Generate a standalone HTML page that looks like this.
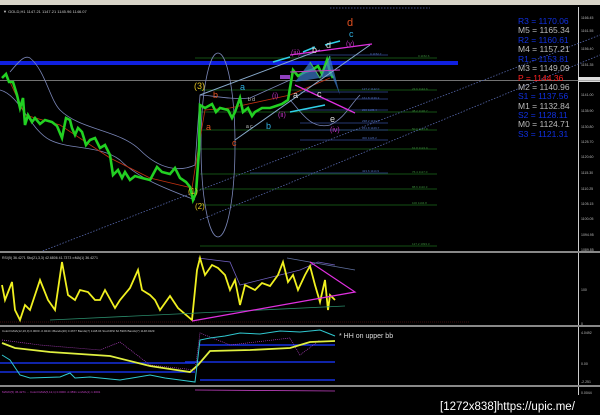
<!DOCTYPE html>
<html><head><meta charset="utf-8"><style>
html,body{margin:0;padding:0;background:#000;width:600px;height:415px;overflow:hidden}
svg{display:block}
text{font-family:"Liberation Sans",sans-serif}
</style></head><body>
<svg width="600" height="415" viewBox="0 0 600 415" xmlns="http://www.w3.org/2000/svg">
<rect width="600" height="415" fill="#000"/>
<rect x="0" y="0" width="600" height="5" fill="#d8d4c8"/>
<text x="3" y="13" font-size="4" fill="#ccc">▼ GOLD,H1  1147.21 1147.21 1145.96 1146.07</text>
<line x1="578.5" y1="7" x2="578.5" y2="395" stroke="#ccc" stroke-width="1"/>
<g font-size="3.5" fill="#bbb">
<text x="581" y="19">1166.45</text><text x="581" y="32">1161.55</text><text x="581" y="50">1156.40</text>
<text x="581" y="66">1151.35</text><text x="581" y="96">1141.00</text><text x="581" y="112">1135.90</text>
<text x="581" y="128">1130.80</text><text x="581" y="143">1125.70</text><text x="581" y="158">1120.60</text>
<text x="581" y="174">1115.30</text><text x="581" y="190">1110.25</text><text x="581" y="205">1105.15</text>
<text x="581" y="220">1100.05</text><text x="581" y="236">1094.95</text><text x="581" y="251">1089.85</text>
<text x="581" y="291">100</text><text x="581" y="325">0</text><text x="581" y="334">4.0492</text>
<text x="581" y="365">0.00</text><text x="581" y="383">-2.251</text><text x="581" y="394">0.0044</text>
</g>
<rect x="578" y="77" width="22" height="5" fill="#ddd"/>
<rect x="0" y="61" width="458" height="4" fill="#1020e0"/>
<line x1="0" y1="80.5" x2="600" y2="80.5" stroke="#999" stroke-width="0.8"/>
<g stroke="#1a6a1a" stroke-width="0.8">
<line x1="195" y1="58" x2="437" y2="58"/><line x1="200" y1="90" x2="437" y2="90"/>
<line x1="200" y1="112" x2="437" y2="112"/><line x1="200" y1="130" x2="437" y2="130"/>
<line x1="200" y1="149" x2="437" y2="149"/><line x1="200" y1="174" x2="437" y2="174"/>
<line x1="200" y1="189" x2="437" y2="189"/><line x1="200" y1="205" x2="437" y2="205"/>
<line x1="200" y1="246" x2="437" y2="246"/>
</g>
<g stroke="#334a99" stroke-width="0.8">
<line x1="300" y1="55" x2="388" y2="55"/><line x1="300" y1="92" x2="388" y2="92"/>
<line x1="300" y1="99" x2="388" y2="99"/><line x1="300" y1="110" x2="388" y2="110"/>
<line x1="300" y1="123" x2="388" y2="123"/><line x1="300" y1="130" x2="388" y2="130"/>
<line x1="300" y1="140" x2="388" y2="140"/><line x1="250" y1="173" x2="388" y2="173"/>
</g>
<g font-size="3" fill="#3a8a3a"><text x="418" y="57">0.1152.6</text><text x="412" y="90">23.6 1142.6</text><text x="412" y="112">38.2 1136.7</text><text x="412" y="130">50.0 1127.8</text><text x="412" y="149">61.8 1122.9</text><text x="412" y="173">76.4 1117.0</text><text x="412" y="188">88.6 1110.3</text><text x="412" y="204">100 1104.8</text><text x="412" y="245">127.2 1093.3</text></g>
<g font-size="3" fill="#5070c0"><text x="370" y="55">0 1152.7</text><text x="362" y="90">127.2 1142.0</text><text x="362" y="99">161.8 1139.3</text><text x="362" y="111">200 1135.4</text><text x="362" y="122">238.2 1131.5</text><text x="362" y="129">261.8 1129.7</text><text x="362" y="139">300 1126.2</text><text x="362" y="172">423.6 1114.9</text></g>
<g stroke="#5566aa" stroke-width="0.8" stroke-dasharray="1.5,1.5" fill="none">
<line x1="40" y1="252" x2="600" y2="35"/><line x1="200" y1="220" x2="600" y2="55"/>
<line x1="330" y1="8" x2="430" y2="8"/>
</g>
<g stroke="#7a86b8" stroke-width="0.8" fill="none">
<path d="M10,72 C20,60 25,55 30,58 C45,70 50,100 60,110 C80,130 120,130 140,150 C160,170 180,172 195,165 L200,95 C210,95 230,100 250,98 L290,80"/>
<path d="M0,90 C20,95 30,130 50,140 C70,150 100,145 120,160 C140,180 170,190 195,200"/>
<ellipse cx="218" cy="145" rx="17" ry="92"/>
<path d="M290,100 C300,110 310,130 330,125 C345,118 350,105 360,95"/>
</g>
<path d="M10,82 L25,115 L60,125 L110,158 L150,178 L192,188 L198,150 L205,110 L230,108 L290,95 L330,78" stroke="#c03010" stroke-width="0.8" fill="none"/>
<path d="M2,78 L6,74 L9,82 L13,82 L17,95 L20,108 L23,98 L25,125 L28,115 L32,122 L35,118 L40,124 L45,120 L52,122 L57,126 L62,138 L66,118 L70,120 L72,128 L75,135 L78,128 L82,132 L86,145 L90,140 L95,138 L100,148 L105,145 L110,155 L113,175 L118,170 L122,178 L125,172 L130,180 L135,176 L142,178 L150,180 L157,167 L162,172 L170,174 L175,168 L180,178 L186,182 L190,187 L193,200 L196,193 L199,150 L200,105 L205,108 L212,104 L216,112 L220,108 L228,110 L232,118 L235,112 L240,98 L243,112 L248,108 L252,116 L255,112 L262,108 L270,108 L276,106 L282,104 L288,100 L291,82 L293,70 L298,76 L305,72 L312,70 L318,66 L322,74 L327,60 L330,72 L333,78" stroke="#22d022" stroke-width="2.6" fill="none"/>
<path d="M295,82 L310,62 L320,78 L330,56 L340,95 L332,76 Z" fill="#3a7acc" fill-opacity="0.7"/>
<path d="M310,62 L320,78 L330,56" stroke="#40c060" stroke-width="1" fill="none"/>
<rect x="280" y="75" width="10" height="4" fill="#9040c0"/>
<g stroke-width="1" fill="none">
<line x1="200" y1="95" x2="320" y2="50" stroke="#88aacc"/>
<line x1="235" y1="140" x2="370" y2="45" stroke="#88aacc"/>
<line x1="290" y1="55" x2="372" y2="44" stroke="#e030e0" stroke-width="1.3"/>
<line x1="295" y1="85" x2="355" y2="113" stroke="#e030e0" stroke-width="1.3"/>
<line x1="290" y1="72" x2="340" y2="70" stroke="#c040c0"/>
</g>
<g stroke="#30d0e8" stroke-width="1.5"><line x1="273" y1="62" x2="290" y2="57"/><line x1="303" y1="52" x2="315" y2="47"/><line x1="325" y1="45" x2="340" y2="41"/><line x1="290" y1="112" x2="325" y2="105"/></g>
<g font-family="Liberation Serif" font-size="9">
<text x="194" y="89" fill="#e0c020">(3)</text><text x="213" y="98" fill="#e05020">b</text>
<text x="206" y="130" fill="#e05020">a</text><text x="232" y="146" fill="#e05020">c</text>
<text x="240" y="90" fill="#30b0e0">a</text><text x="266" y="129" fill="#30b0e0">b</text>
<text x="291" y="55" fill="#c030c0" font-size="7">(iii)</text><text x="272" y="98" fill="#c030c0" font-size="7">(i)</text>
<text x="278" y="117" fill="#c030c0" font-size="7">(ii)</text><text x="330" y="132" fill="#c030c0" font-size="7">(iv)</text>
<text x="346" y="46" fill="#c030c0" font-size="7">(v)</text>
<text x="293" y="98" fill="#ddd">a</text><text x="317" y="97" fill="#ddd">c</text><text x="330" y="122" fill="#ddd">e</text>
<text x="312" y="53" fill="#ddd">b</text><text x="326" y="48" fill="#ddd">d</text>
<text x="347" y="26" fill="#e05020" font-size="11">d</text><text x="349" y="37" fill="#30b0e0">c</text>
<text x="188" y="194" fill="#e0c020" font-size="8">(1)</text><text x="195" y="209" fill="#e0c020" font-size="8">(2)</text>
<text x="248" y="101" fill="#ccc" font-size="5">b d</text><text x="246" y="128" fill="#ccc" font-size="5">a c</text>
</g>
<g font-size="8.5">
<text x="518" y="24" fill="#1030e0">R3 = 1170.06</text><text x="518" y="33" fill="#bbb">M5 = 1165.34</text>
<text x="518" y="43" fill="#1030e0">R2 = 1160.61</text><text x="518" y="52" fill="#bbb">M4 = 1157.21</text>
<text x="518" y="62" fill="#1030e0">R1 = 1153.81</text><text x="518" y="71" fill="#bbb">M3 = 1149.09</text>
<text x="518" y="81" fill="#ff2020">P  = 1144.36</text><text x="518" y="90" fill="#bbb">M2 = 1140.96</text>
<text x="518" y="99" fill="#1030e0">S1 = 1137.56</text><text x="518" y="109" fill="#bbb">M1 = 1132.84</text>
<text x="518" y="118" fill="#1030e0">S2 = 1128.11</text><text x="518" y="127" fill="#bbb">M0 = 1124.71</text>
<text x="518" y="137" fill="#1030e0">S3 = 1121.31</text>
</g>
<rect x="0" y="251" width="600" height="2" fill="#888"/>
<rect x="0" y="325" width="600" height="2" fill="#888"/>
<rect x="0" y="385" width="600" height="2" fill="#888"/>
<text x="2" y="259" font-size="3.5" fill="#ccc">RSI(5) 36.4271  Sto(21,3,3) 42.6806 41.7373  ∞MA(1) 36.4271</text>
<line x1="0" y1="322" x2="470" y2="322" stroke="#802020" stroke-width="0.6" stroke-dasharray="1,1"/>
<path d="M198,258 L230,262 L240,285 L300,270 L318,262 L335,265" stroke="#7060c0" stroke-width="0.8" fill="none"/>
<path d="M2,285 L5,300 L12,282 L15,310 L20,320 L25,305 L30,310 L40,280 L48,300 L55,310 L62,262 L68,295 L75,300 L80,290 L88,292 L95,300 L100,300 L105,290 L115,308 L120,300 L130,288 L138,270 L142,290 L150,295 L155,300 L160,310 L170,296 L178,308 L192,320 L197,270 L200,258 L205,275 L212,265 L218,268 L225,275 L230,290 L235,280 L240,305 L245,285 L255,290 L262,283 L270,286 L278,275 L283,262 L288,282 L293,275 L298,290 L305,275 L310,266 L315,285 L320,302 L325,280 L328,310 L330,295 L335,300" stroke="#f0f020" stroke-width="1.8" fill="none"/>
<line x1="50" y1="320" x2="345" y2="306" stroke="#2a8a6a" stroke-width="0.8"/>
<line x1="287" y1="258" x2="355" y2="270" stroke="#6070a0" stroke-width="0.8"/>
<path d="M192,321 L355,292 L310,262" stroke="#e030e0" stroke-width="1.2" fill="none"/>
<text x="2" y="332" font-size="3" fill="#ccc">ColorOsMA(12,26,9) 0.0000 -0.0244  ×Bands(20) 0.4677  Bands(7) 1148.04  StochRSI 62.5906  Bands(7) 1148.0429</text>
<text x="339" y="338" font-family="Liberation Serif" font-size="7" fill="#ddd">* HH on upper bb</text>
<g stroke="#1530e0" stroke-width="1.5"><line x1="0" y1="363" x2="195" y2="363"/><line x1="185" y1="362" x2="335" y2="362"/><line x1="0" y1="372" x2="195" y2="372"/><line x1="200" y1="380" x2="335" y2="380"/><line x1="200" y1="345" x2="335" y2="345"/></g>
<path d="M2,340 L40,345 L100,350 L120,342 L150,365 L195,370 L200,333 L230,345 L290,338 L300,355 L320,340" stroke="#b040c0" stroke-width="0.7" stroke-dasharray="1,1" fill="none"/>
<path d="M2,343 L15,348 L50,352 L110,356 L150,366 L190,372 L198,365 L210,351 L250,350 L290,348 L310,342 L335,341" stroke="#e0f040" stroke-width="1.8" fill="none"/>
<path d="M2,355 L10,360 L20,375 L30,378 L60,377 L70,373 L75,378 L90,377 L120,380 L150,375 L165,378 L195,382 L200,340 L210,338 L225,336 L240,333 L260,334 L280,331 L300,332 L320,330 L330,334 L335,336" stroke="#30c8d0" stroke-width="1" fill="none"/>
<text x="2" y="393" font-size="3" fill="#c040c0">MAVD(5) 36.4271 ... ColorOsMA(5,12,1) 0.0000 -0.3831  xxxMA(1) 1.3001</text>
<line x1="195" y1="390" x2="335" y2="391" stroke="#c040c0" stroke-width="0.8"/>
<text x="440" y="410" font-family="DejaVu Sans Mono,Liberation Mono,monospace" font-size="11.5" fill="#fff">[1272x838]https://upic.me/</text>
</svg>
</body></html>
